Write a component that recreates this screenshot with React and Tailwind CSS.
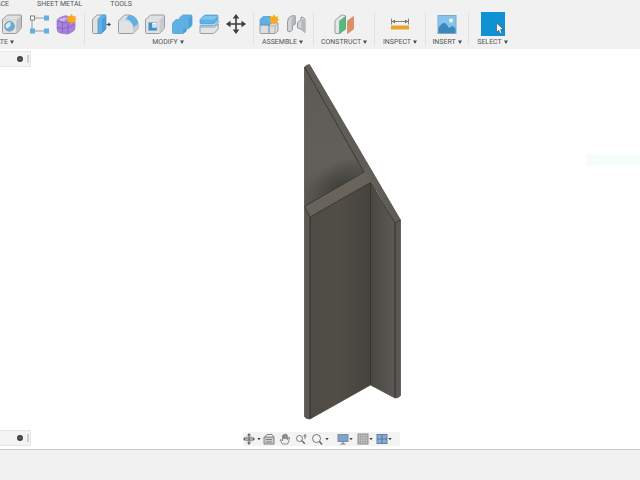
import React from 'react';

const OUTLINE = '#989da0';
const BLUE = '#5fb0e5';

function Icon({ children, label }) {
  return (
    <svg viewBox="0 0 22 22" className="block size-[22px]" role="img" aria-label={label}>
      {children}
    </svg>
  );
}

const Hole = () => (
  <Icon label="Hole">
    <path d="M1.500 6.500 6 2.500q.6-.5 1.500-.5h12q1 0 1 1v11.500q0 .8-.6 1.300L16 20q-.5.500-1.300.5H2.500q-1 0-1-1z" fill="#dfe1e2" stroke={OUTLINE} />
    <path d="M15.500 7 20 3v11.500L15.500 20z" fill="#bfc3c6" />
    <path d="M2 7h13.500v13" fill="none" stroke="#c2c5c7" strokeWidth=".7" />
    <circle cx="8.500" cy="13.300" r="4.800" fill={BLUE} stroke="#84949e" />
    <path d="M4.500 14a5 5 0 0 1 5-5v3.500l-3 3z" fill="#d8edf8" />
  </Icon>
);

const Pattern = () => (
  <Icon label="Rectangular pattern">
    <path d="M4 7v10M6 5h12M6 18h12" stroke="#9a9a9a" fill="none" />
    <rect x="2.500" y="3" width="4" height="4" fill="#fff" stroke="#808080" />
    <rect x="16" y="2.500" width="5" height="5" fill={BLUE} />
    <rect x="2" y="15.500" width="5" height="5" fill={BLUE} />
    <rect x="16" y="15.500" width="5" height="5" fill={BLUE} />
  </Icon>
);

const Spark = ({ x, y }) => (
  <g transform={`translate(${x} ${y})`} fill="#f8aa1c">
    <path d="m0-5.200 1.500 2.500L4.300-3 3.500-.8 5.500 0 3.500 1.200 4 4 1.300 3 0 5.200-1.300 3-4 4l.5-2.800L-5.500 0l2-.8-.8-2.200 2.800.3z" />
  </g>
);

const Form = () => (
  <Icon label="Create form">
    <path d="M2 8q0-2 2-3l5-2q1.500-.5 3 0l6 2q2 1 2 3v7q0 2-2 3.500l-4 2q-1.500.5-3 .5l-6-1q-3-1-3-4z" fill="#a981e0" stroke="#9a78cc" strokeWidth=".7" />
    <path d="M2.500 8q5 2.500 10.500 1.500l7-2M2 14.500q6 2 11 0l7-3M7.500 4v16M13 9.500V21" fill="none" stroke="#8560bd" strokeWidth=".8" />
    <path d="M3.500 6.500q4-2.500 9-2l-3.500 4q-3 0-5.500-2" fill="#cfb4f4" />
    <Spark x={16.5} y={6} />
  </Icon>
);

const PressPull = () => (
  <Icon label="Press pull">
    <path d="M2.500 6.500 6 2.700q.6-.7 1.500-.7H15l-5 4v14.500H3.500q-1 0-1-1z" fill="#dfe2e3" stroke={OUTLINE} />
    <path d="M8 6.500 12 2h3.500q.5 0 .5.500v13.500L11.500 20.500H8z" fill={BLUE} stroke="#5797bf" strokeWidth=".7" />
    <path d="M12 6.500 16 3v13l-4 4z" fill="#479fd9" />
    <path d="M16.500 11.500h3" stroke="#444" strokeWidth="1.200" />
    <path d="m18.500 9.500 2.500 2-2.500 2z" fill="#444" />
  </Icon>
);

const Fillet = () => (
  <Icon label="Fillet">
    <path d="M1.500 8.500q0-1 .7-1.600L6.500 3q1-1 2.500-1h3q8 1 9 9v4q0 .8-.6 1.300L16.500 20q-.5.500-1.300.5H2.500q-1 0-1-1z" fill="#e0e2e3" stroke={OUTLINE} />
    <path d="M12 2q8.500 1 9 9l-4.500 3.500Q15.500 7.500 8.500 6z" fill={BLUE} />
    <path d="M16.500 14.500V20l4.300-4v-5z" fill="#c9cccd" />
    <path d="M2 7h4q9 0 10.500 8v5" fill="none" stroke="#c2c5c7" strokeWidth=".7" />
  </Icon>
);

const Shell = () => (
  <Icon label="Shell">
    <path d="M1.500 6.500 6 2.500q.6-.5 1.500-.5h12q1 0 1 1v11.500q0 .8-.6 1.300L16 20q-.5.500-1.300.5H2.500q-1 0-1-1z" fill="#dfe1e2" stroke={OUTLINE} />
    <path d="M15.500 7 20 3v11.500L15.500 20z" fill="#c9cccd" />
    <path d="M4.500 9.500h8.500v8H4.500z" fill="#fff" stroke="#9aa7b0" strokeWidth=".7" />
    <path d="M4.800 9.800h3.500v4.700h4.400v2.700H4.800z" fill="#3b93cd" />
    <path d="M8.300 14.500V11h4.400v3.500z" fill="#c6e3f5" />
  </Icon>
);

const Combine = () => (
  <Icon label="Combine">
    <path d="M1.500 11q0-1 .6-1.600L4.500 7q.5-.5 1.500-.5h2.500V5L11 2.500q.5-.5 1.500-.5H20q1 0 1 1v8.500q0 .8-.5 1.300L18.500 15q-.5.500-1.300.5H15.500v1.500q0 .8-.5 1.300L13 20q-.5.500-1.300.5H2.500q-1 0-1-1z" fill={BLUE} stroke="#559fd0" strokeWidth=".8" />
    <path d="M17.500 5.500 21 2.800v8.700L17.500 15zM12 15.500h3.300V18L12 20.300z" fill="#4ba2da" />
  </Icon>
);

const Split = () => (
  <Icon label="Split body">
    <path d="M2 14h14.500l3.700-3v4.800L16.500 20q-.5.500-1.300.5H3q-1 0-1-1z" fill="#e3e5e5" stroke={OUTLINE} />
    <path d="M2 6.500 6 2.500q.5-.5 1.500-.5H19q1 0 1 1v4.500L16 11H3q-1 0-1-1z" fill={BLUE} stroke="#559fd0" strokeWidth=".7" />
    <path d="M2.500 6.500H16L20 3H7z" fill="#82c3ec" />
    <path d="M1.500 12.700h15L21 8.500" fill="none" stroke="#6db7e6" strokeWidth="1.200" />
  </Icon>
);

const Move = () => (
  <Icon label="Move">
    <path d="M11 4v14M4 11h14" stroke="#3c3c3c" strokeWidth="1.600" />
    <path d="m11 1 3.300 4.500H7.700zM11 21l3.300-4.500H7.700zM1 11l4.500-3.300v6.600zM21 11l-4.500-3.300v6.600z" fill="#3c3c3c" />
  </Icon>
);

const NewComponent = () => (
  <Icon label="New component">
    <path d="M2 12h9v8.500H3q-1 0-1-1zM11 12l3-2h6v8l-3 2.500h-6z" fill="#dcdfe1" stroke={OUTLINE} />
    <path d="M2 6.500 5 3.500h8v6L11 12H2z" fill={BLUE} stroke="#5797bf" strokeWidth=".7" />
    <path d="M11 13h6v7M17 13l3-2.500" fill="none" stroke="#adb1b4" />
    <Spark x={16} y={6.5} />
  </Icon>
);

const Joint = () => (
  <Icon label="Joint">
    <path d="M2.500 9q0-5 4-6l3-.5q1 0 1 1V11l-3 2v4L5 19l-2.500-1z" fill="#cfd3d5" stroke={OUTLINE} />
    <path d="M6.500 6q.5-3 4-3v8l-4 2.500z" fill="#b3b8ba" />
    <path d="m12.500 9.500 3.500-3V4l2.500.5q1.500 1 1.500 3V19.500L16 16l-3.500-1z" fill="#cfd3d5" stroke={OUTLINE} />
    <path d="M16.500 6v10l3 2.500V7z" fill="#b3b8ba" />
  </Icon>
);

const Plane = () => (
  <Icon label="Offset plane">
    <path d="M2 7.500 7 3q1.500-1 3.500-1l2 1v13l-6 4.500H3q-1 0-1-1z" fill="#e4e6e7" stroke={OUTLINE} />
    <path d="m6.500 8 6-4.500v12.500l-6 4.500z" fill="#51bd7a" stroke="#5ba87a" strokeWidth=".7" />
    <path d="m14.500 8 6-4.500v12.500l-6 4.500z" fill="#df8e60" stroke="#c9875f" strokeWidth=".7" />
  </Icon>
);

const Measure = () => (
  <Icon label="Measure">
    <path d="M2.500 5.500v6M19.500 5.500v6M3 8.500h16" stroke="#858585" fill="none" />
    <path d="m3 8.500 3-2v4zM19 8.500l-3-2v4z" fill="#777" />
    <rect x="2" y="12.500" width="18" height="4" fill="#eda62a" />
    <path d="M5 13v1.500m3-1.500v1.500m3-1.500v1.500m3-1.500v1.500m3-1.500v1.500" stroke="#cf9030" strokeWidth=".6" />
  </Icon>
);

const Picture = () => (
  <Icon label="Insert image">
    <rect x="2" y="2.500" width="18" height="18" fill="#84c5ef" stroke="#7fa9c4" />
    <circle cx="15" cy="7.500" r="2" fill="#fff9d9" />
    <path d="M2.500 15q3-5 5.500-5 2 0 5 5l3-2q2 0 3.500 3v4h-17z" fill="#3c88ba" />
  </Icon>
);

const Select = () => (
  <svg viewBox="0 0 24 24" className="block size-6" role="img" aria-label="Select">
    <rect width="24" height="24" fill="#0f91d4" />
    <path d="M15.500 11v9.200l2.200-2 1.500 3.500 1.800-.8-1.500-3.400h3z" fill="#fff" stroke="#40576a" strokeWidth=".7" />
  </svg>
);

function Caret() {
  return (
    <svg viewBox="0 0 4 4" className="block size-1" aria-hidden="true">
      <path d="M0 .5h4L2 4z" fill="#4a4a4a" />
    </svg>
  );
}

const GROUPS = [
  { name: 'MODIFY', tools: [PressPull, Fillet, Shell, Combine, Split, Move], width: 'w-[169px] pr-[2px]' },
  { name: 'ASSEMBLE', tools: [NewComponent, Joint], width: 'w-[60px] pr-[2px]' },
  { name: 'CONSTRUCT', tools: [Plane], width: 'w-[61px]' },
  { name: 'INSPECT', tools: [Measure], width: 'w-[51px]' },
  { name: 'INSERT', tools: [Picture], width: 'w-[43px]' },
  { name: 'SELECT', tools: [Select], width: 'w-[48px]' },
];

function MenuLabel({ name }) {
  return (
    <button className="flex shrink-0 items-center gap-[2px] whitespace-nowrap leading-[8px]">
      {name}
      <Caret />
    </button>
  );
}

function Group({ name, tools, width }) {
  return (
    <section className={`flex shrink-0 flex-col items-center gap-[2px] border-l border-[#e2e2e2] ${width}`}>
      <div className="flex h-6 items-center gap-[5px]">
        {tools.map((Tool, i) => (
          <button key={i} className="block">
            <Tool />
          </button>
        ))}
      </div>
      <MenuLabel name={name} />
    </section>
  );
}

function Toolbar() {
  return (
    <header className="h-[49px] shrink-0 overflow-hidden bg-[#f1f1f1] text-[7px] text-[#555]">
      <nav className="flex h-3 items-start gap-7 leading-[8px]">
        <button className="flex w-[9px] justify-end">SURFACE</button>
        <button className="whitespace-nowrap">SHEET METAL</button>
        <button>TOOLS</button>
      </nav>
      <div className="flex">
        <section className="flex w-[84px] shrink-0 flex-col gap-[2px]">
          <div className="flex h-6 items-center gap-[5px] pl-px">
            <button><Hole /></button>
            <button><Pattern /></button>
            <button><Form /></button>
          </div>
          <div className="flex w-[14px] justify-end">
            <MenuLabel name="CREATE" />
          </div>
        </section>
        {GROUPS.map((g) => (
          <Group key={g.name} {...g} />
        ))}
      </div>
    </header>
  );
}

function PanelHandle({ label }) {
  return (
    <div className="flex h-4 items-center justify-end gap-1 border border-l-0 border-[#e6e6e6] bg-[#f4f4f4] pr-px">
      <button aria-label={label}>
        <svg viewBox="0 0 6 6" className="block size-[6px]">
          <circle cx="3" cy="3" r="3" fill="#3d3d3d" />
          <path d="M1.500 3h3" stroke="#aaa" strokeWidth=".7" />
        </svg>
      </button>
      <span className="h-2 w-[2px] bg-[#cfcfcf]" />
    </div>
  );
}

function Model() {
  return (
    <svg viewBox="300 49 105 382" className="block h-[382px] w-[105px]" role="img" aria-label="Bracket model">
      <defs>
        <linearGradient id="back" gradientUnits="userSpaceOnUse" x1="304" y1="67" x2="345" y2="200">
          <stop offset="0" stopColor="#5c5b56" />
          <stop offset=".7" stopColor="#605f5a" />
          <stop offset="1" stopColor="#55544f" />
        </linearGradient>
        <radialGradient id="shade" gradientUnits="userSpaceOnUse" cx="0" cy="0" r="1" gradientTransform="translate(340 185) rotate(-30) scale(38 22)">
          <stop offset="0" stopColor="#383631" stopOpacity=".7" />
          <stop offset="1" stopColor="#383631" stopOpacity="0" />
        </radialGradient>
        <linearGradient id="front" x1="0" y1="0" x2="1" y2="0">
          <stop offset="0" stopColor="#4d4b44" />
          <stop offset=".45" stopColor="#504e46" />
          <stop offset="1" stopColor="#45433d" />
        </linearGradient>
        <linearGradient id="side" x1="0" y1="0" x2="1" y2="0">
          <stop offset="0" stopColor="#484742" />
          <stop offset="1" stopColor="#5b5a56" />
        </linearGradient>
      </defs>
      <path d="M304.500 67 364 172l-59.500 34.500z" fill="url(#back)" />
      <path d="M304.500 67 364 172l-59.500 34.500z" fill="url(#shade)" />
      <path d="M304.500 67q1.500-2 5-2.500L400.500 220 395 223 371 182 364 172z" fill="#605d57" />
      <path d="m304.500 206.500 59.500-34.500 4-3 6 10-3.500 3.500-60.500 34.500z" fill="#69645b" />
      <path d="m364 172 3-7 11 18-2 8-5-8z" fill="#645f58" />
      <path d="m304.500 206.500 5.500 10.500v202q-4 0-5.500-2.500z" fill="#5b5953" />
      <path d="m310 217 60.500-34.500V385L310 419z" fill="url(#front)" />
      <path d="M370.500 182.500 395 223v175l-24.500-13z" fill="url(#side)" />
      <path d="m395 223 5.500-3v175.500q-2 2.500-5.500 2.500z" fill="#5a5852" />
      <g fill="none" stroke="#2d2b27" strokeWidth=".9" strokeLinejoin="round">
        <path d="M304.500 67 364 172l-59.500 34.500 5.500 10.500 60.500-34.500L395 223l5.500-3" />
        <path d="M310 217v202M370.500 182.500V385M395 223v175" />
      </g>
      <path d="M304.500 67q1.500-2 5-2.500L400.500 220v175.500q-2 2.500-5.500 2.500l-24.500-13L310 419q-4 0-5.500-2.500z" fill="none" stroke="#45433e" strokeWidth=".7" />
    </svg>
  );
}

const NAV = [
  {
    name: 'Orbit', caret: true, space: 'gap-[2px] mr-[2px]',
    art: <><path d="M6 1v10M1 6h10" stroke="#666" strokeWidth="1.200" /><ellipse cx="6" cy="6" rx="4.500" ry="2" fill="none" stroke="#888" /><path d="m6 0 2 2.500H4zM6 12l2-2.500H4zM0 6l2-2v4zM12 6l-2-2v4z" fill="#666" /></>,
  },
  {
    name: 'Look at', space: 'mr-1',
    art: <><path d="M1 4h10v7H1z" fill="#ccc" stroke="#808080" /><path d="M2 4 4 1.500h5L11 4M3 6.500h6M3 9h6" fill="none" stroke="#808080" /></>,
  },
  {
    name: 'Pan', space: 'mr-1',
    art: <path d="M3.500 11 1 7l1-.5L3.500 8V2.500h1.200V6 1.500h1.200V6 1.200h1.300V6 2.200h1.200v4.500L9.500 4.500h1L9.500 9 8.500 11z" fill="#eee" stroke="#777" strokeWidth=".8" />,
  },
  {
    name: 'Zoom', space: 'mr-1',
    art: <><circle cx="4.500" cy="5.500" r="3" fill="#f8f8f8" stroke="#777" /><path d="m6.800 7.800 3 3" stroke="#666" strokeWidth="1.400" /><path d="M10 1v5M8.500 3h3" stroke="#777" /></>,
  },
  {
    name: 'Fit', caret: true, space: 'gap-[2px] mr-2',
    art: <><circle cx="5.500" cy="5.500" r="4" fill="#f6f6f6" stroke="#777" /><path d="m8.500 8.500 2.500 3" stroke="#666" strokeWidth="1.600" /></>,
  },
  {
    name: 'Display settings', caret: true, space: 'mr-1',
    art: <><rect x="1" y="1.500" width="10" height="7" fill="#7ba3cf" stroke="#7f8b98" /><path d="M6 8.500v2.500M3.500 11h5" stroke="#777" /></>,
  },
  {
    name: 'Grid and snaps', caret: true, space: 'mr-[3px]',
    art: <><rect x="1" y="1" width="10" height="10" fill="#c3c3c3" stroke="#8b8b8b" /><path d="M3.500 1v10M6 1v10M8.500 1v10M1 3.500h10M1 6h10M1 8.500h10" stroke="#9b9b9b" strokeWidth=".6" /></>,
  },
  {
    name: 'Viewports', caret: true, space: '',
    art: <><rect x="1" y="1.500" width="10" height="9" fill="#86abd6" stroke="#6484a8" /><path d="M6 1.500v9M1 6h10" stroke="#5b7ba2" /></>,
  },
];

function NavBar() {
  return (
    <div className="flex h-[14px] w-[157px] items-center bg-[#f3f3f3]">
      {NAV.map((n) => (
        <button key={n.name} aria-label={n.name} className={`flex items-center ${n.space}`}>
          <svg viewBox="0 0 12 12" className="block size-[12px]">{n.art}</svg>
          {n.caret && (
            <svg viewBox="0 0 4 4" className="block size-[4px]"><path d="M.3 1h3.400L2 3.300z" fill="#444" /></svg>
          )}
        </button>
      ))}
    </div>
  );
}

export default function App() {
  return (
    <div className="flex min-h-screen flex-col bg-white font-['Roboto',sans-serif]">
      <Toolbar />
      <main className="relative flex flex-1">
        <aside className="flex w-[31px] flex-col justify-between pb-[3px] pt-[2px]">
          <PanelHandle label="Collapse browser" />
          <PanelHandle label="Collapse comments" />
        </aside>
        <div className="flex flex-1 flex-col items-center justify-between pb-[3px]">
          <div className="pl-[62px]">
            <Model />
          </div>
          <NavBar />
        </div>
        <div className="w-7" />
        <div className="absolute right-0 top-[105px] h-3 w-[54px] rounded-l bg-[#f6fcfb]" />
      </main>
      <footer className="h-[31px] shrink-0 border-t border-[#c9c9c9] bg-[#f1f1f1]" />
    </div>
  );
}
